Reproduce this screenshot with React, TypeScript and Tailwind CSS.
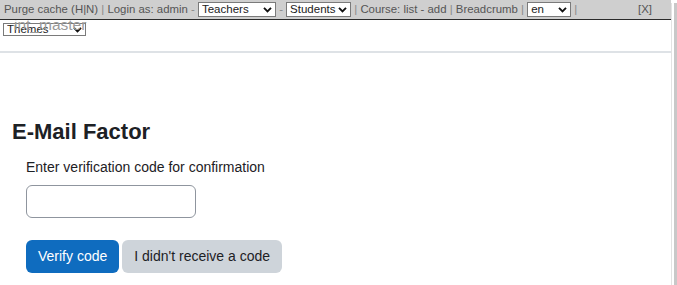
import type { ReactNode } from 'react'

function Chevron() {
  return (
    <svg viewBox="0 0 10 8" className="pointer-events-none absolute right-[4px] top-1/2 h-[7px] w-[9px] -translate-y-1/2" aria-hidden>
      <path d="M1 1.6 5 5.6 9 1.6" fill="none" stroke="#111" strokeWidth="2.2" />
    </svg>
  )
}

function MiniSelect({ value, className }: { value: string; className: string }) {
  return (
    <span className={`relative flex shrink-0 ${className}`}>
      <select
        defaultValue={value}
        className="h-full w-full appearance-none rounded-none border border-[#7a7a7a] bg-white py-0 pl-[3px] text-[11.5px] leading-none text-[#222] outline-none"
      >
        <option>{value}</option>
      </select>
      <Chevron />
    </span>
  )
}

function Sep({ children }: { children: ReactNode }) {
  return <span className="text-[#8a8a8a]">{children}</span>
}

export default function App() {
  return (
    <div className="flex h-[285px] w-[677px] overflow-hidden bg-white font-['Liberation_Sans',Arial,sans-serif]">
      <main className="flex w-[671px] flex-col">
        <div className="relative z-20 flex h-[20px] items-center whitespace-pre border-b border-[#2b2b2b] bg-[#cfcfcf] pl-[4px] pr-[19px] text-[11.4px] text-[#555]">
          <span>Purge cache (H|N)</span>
          <Sep> | </Sep>
          <span>Login as: admin</span>
          <Sep> - </Sep>
          <MiniSelect value="Teachers" className="h-[15px] w-[78px]" />
          <Sep> - </Sep>
          <MiniSelect value="Students" className="h-[15px] w-[65px]" />
          <Sep> | </Sep>
          <span>Course: list - add</span>
          <Sep> | </Sep>
          <span>Breadcrumb</span>
          <Sep> | </Sep>
          <MiniSelect value="en" className="h-[15px] w-[44px]" />
          <Sep> |</Sep>
          <span className="ml-auto">[X]</span>
        </div>

        <div className="relative h-[33px] border-b-2 border-[#dee2e6]">
          <div className="absolute left-[3px] top-[3px]">
            <MiniSelect value="Themes" className="h-[13px] w-[83px]" />
          </div>
          <span className="pointer-events-none absolute left-[14px] top-[-4px] z-10 text-[15.5px] leading-[18px] text-[#9a9a9a]">
            int_master
          </span>
        </div>

        <section className="px-[12px] pt-[66px]">
          <h2 className="text-[22px] font-bold leading-[26px] text-[#1d2125]">E-Mail Factor</h2>
          <form className="pl-[14px] pt-[12px]" onSubmit={(event) => event.preventDefault()}>
            <label htmlFor="code" className="block text-[14px] leading-[20px] text-[#1d2125]">
              Enter verification code for confirmation
            </label>
            <input
              id="code"
              type="text"
              className="mt-[8px] h-[33px] w-[170px] rounded-[6px] border border-[#8f959e] bg-white px-3 text-[14px] outline-none"
            />
            <div className="mt-[22px] flex gap-[3px]">
              <button type="submit" className="h-[33px] rounded-[6px] bg-[#0f6cbf] px-[12px] text-[14px] text-white">
                Verify code
              </button>
              <button type="button" className="h-[33px] rounded-[6px] bg-[#ced4da] px-[12px] text-[14px] text-[#1d2125]">
                I didn't receive a code
              </button>
            </div>
          </form>
        </section>
      </main>

      <aside className="mt-[3px] flex w-[6px] border-l border-[#e3e3e3]">
        <div className="ml-[2px] flex-1 bg-[#c8c8c8]" />
      </aside>
    </div>
  )
}
